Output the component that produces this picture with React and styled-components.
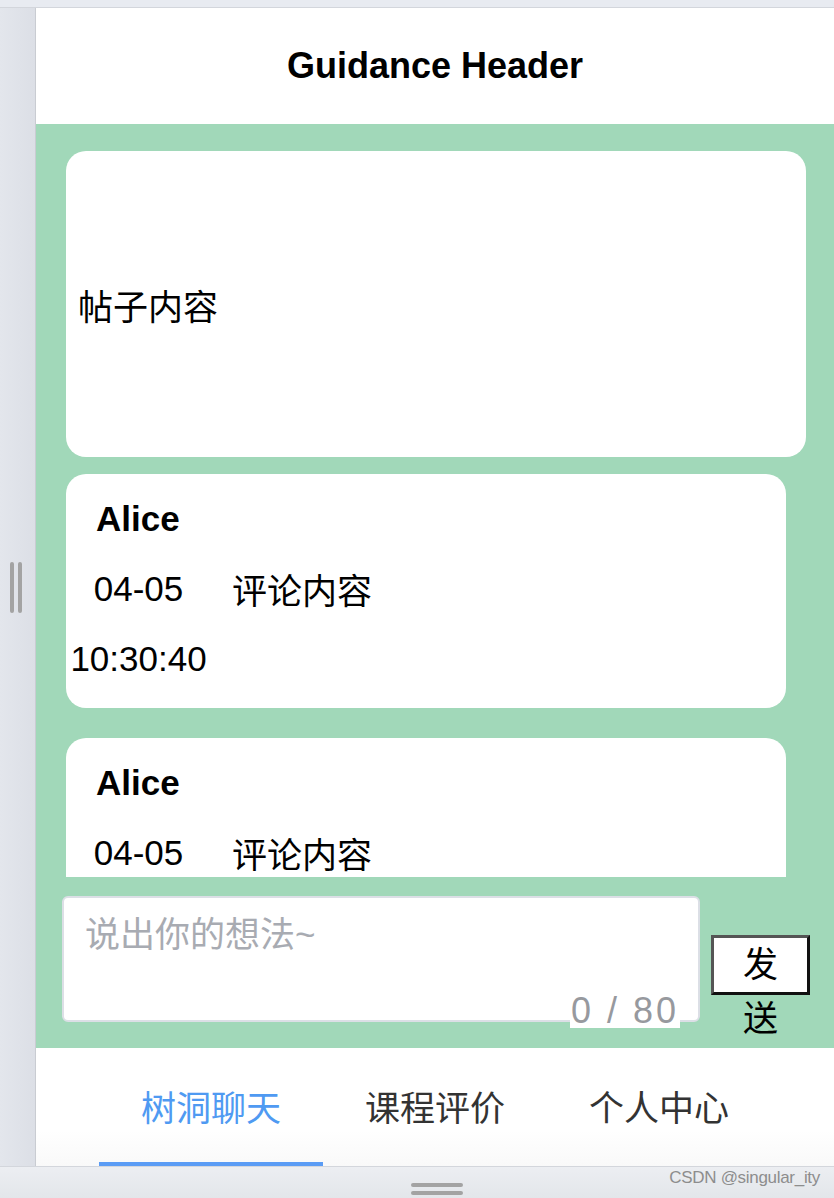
import React from 'react';
import styled, { createGlobalStyle } from 'styled-components';

const GlobalStyle = createGlobalStyle`
  * {
    box-sizing: border-box;
  }
  body {
    margin: 0;
    background: #e4e7ed;
    font-family: "Liberation Sans", "Noto Sans CJK SC", sans-serif;
    color: #000;
  }
`;

const Screen = styled.div`
  position: relative;
  display: grid;
  grid-template-columns: 36px 1fr;
  grid-template-rows: 8px 1158px 32px;
  width: 834px;
  height: 1198px;
  overflow: hidden;
  background: #e4e7ed;
`;

const TopStrip = styled.div`
  grid-column: 1 / 3;
  background: #e8ebf1;
  border-bottom: 1px solid #d3d6dc;
`;

const LeftRail = styled.div`
  display: flex;
  align-items: center;
  gap: 4px;
  padding-left: 10px;
  background: linear-gradient(90deg, #e3e6ec, #dcdfe6);
  border-right: 1px solid #c9ccd2;
`;

const VBar = styled.span`
  width: 4px;
  height: 51px;
  border-radius: 2px;
  background: #a3a3a3;
`;

const BottomStrip = styled.div`
  grid-column: 1 / 3;
  display: flex;
  flex-direction: column;
  align-items: center;
  gap: 4px;
  padding: 16px 0 0 40px;
  background: linear-gradient(#eceef2, #e3e6ea);
  border-top: 1px solid #d3d6dc;
`;

const HBar = styled.span`
  width: 52px;
  height: 4px;
  border-radius: 2px;
  background: #a3a3a3;
`;

const Watermark = styled.div`
  position: absolute;
  right: 14px;
  bottom: 10px;
  font-size: 17px;
  color: #8d8d8d;
  letter-spacing: -0.3px;
`;

const Phone = styled.div`
  display: flex;
  flex-direction: column;
  background: #a1d8b9;
`;

const Header = styled.header`
  display: flex;
  align-items: center;
  justify-content: center;
  height: 116px;
  background: #fff;
  font-size: 36px;
  font-weight: bold;
`;

const Feed = styled.div`
  height: 753px;
  overflow: hidden;
  padding: 27px 0 0 30px;
  display: flex;
  flex-direction: column;
`;

const PostCard = styled.div`
  flex-shrink: 0;
  display: flex;
  align-items: center;
  width: 740px;
  height: 306px;
  padding-left: 12px;
  border-radius: 20px;
  background: #fff;
  font-size: 35px;
`;

const CommentCard = styled.div`
  flex-shrink: 0;
  width: 720px;
  margin-top: ${(p) => p.$gap}px;
  padding: 20px 0 14px 0;
  border-radius: 20px;
  background: #fff;
`;

const Author = styled.div`
  padding-left: 30px;
  font-size: 35px;
  font-weight: bold;
  line-height: 50px;
`;

const CommentRow = styled.div`
  display: flex;
  gap: 21px;
  margin-top: 10px;
  font-size: 35px;
  line-height: 70px;
`;

const Stamp = styled.div`
  width: 145px;
  text-align: center;
`;

const Body = styled.div`
  padding-top: 3px;
`;

const Composer = styled.div`
  flex: 1;
  display: flex;
  align-items: flex-start;
  padding: 19px 0 0 26px;
`;

const InputWrap = styled.div`
  position: relative;
  width: 638px;
  height: 126px;
`;

const Input = styled.textarea`
  display: block;
  width: 100%;
  height: 100%;
  padding: 14px 21px;
  border: 2px solid #dcdfe6;
  border-radius: 6px;
  background: #fff;
  font-family: "Liberation Sans", "Noto Sans CJK SC", sans-serif;
  font-size: 35px;
  line-height: 46px;
  resize: none;
  outline: none;

  &::placeholder {
    color: #a8abb2;
  }
`;

const Counter = styled.span`
  position: absolute;
  right: 20px;
  bottom: -6px;
  padding: 0 1px;
  background: #fff;
  color: #97999e;
  font-size: 36px;
  line-height: 34px;
  letter-spacing: 3px;
`;

const SendButton = styled.div`
  width: 99px;
  height: 60px;
  margin: 39px 0 0 11px;
  padding: 0 14px;
  border: 3px solid #111;
  border-top-color: #555;
  border-left-color: #555;
  background: #fff;
  font-size: 35px;
  line-height: 54px;
  text-align: center;
`;

const TabBar = styled.nav`
  display: flex;
  justify-content: center;
  height: 118px;
  background: linear-gradient(#fff 70%, #f9f9f9);
`;

const Tab = styled.div`
  display: flex;
  align-items: center;
  justify-content: center;
  width: 224px;
  border-bottom: 4px solid ${(p) => (p.$active ? '#5a9cf5' : 'transparent')};
  color: ${(p) => (p.$active ? '#4f9af2' : '#333')};
  font-size: 35px;
`;

const comments = [
  { name: 'Alice', time: '04-05 10:30:40', text: '评论内容' },
  { name: 'Alice', time: '04-05 10:30:40', text: '评论内容' },
];

const tabs = ['树洞聊天', '课程评价', '个人中心'];

export default function App() {
  return (
    <>
      <GlobalStyle />
      <Screen>
        <TopStrip />
        <LeftRail>
          <VBar />
          <VBar />
        </LeftRail>
        <Phone>
          <Header>Guidance Header</Header>
          <Feed>
            <PostCard>帖子内容</PostCard>
            {comments.map((c, i) => (
              <CommentCard key={i} $gap={i === 0 ? 17 : 30}>
                <Author>{c.name}</Author>
                <CommentRow>
                  <Stamp>{c.time}</Stamp>
                  <Body>{c.text}</Body>
                </CommentRow>
              </CommentCard>
            ))}
          </Feed>
          <Composer>
            <InputWrap>
              <Input placeholder="说出你的想法~" maxLength={80} />
              <Counter>0 / 80</Counter>
            </InputWrap>
            <SendButton>发送</SendButton>
          </Composer>
          <TabBar>
            {tabs.map((t, i) => (
              <Tab key={t} $active={i === 0}>
                {t}
              </Tab>
            ))}
          </TabBar>
        </Phone>
        <BottomStrip>
          <HBar />
          <HBar />
        </BottomStrip>
        <Watermark>CSDN @singular_ity</Watermark>
      </Screen>
    </>
  );
}
